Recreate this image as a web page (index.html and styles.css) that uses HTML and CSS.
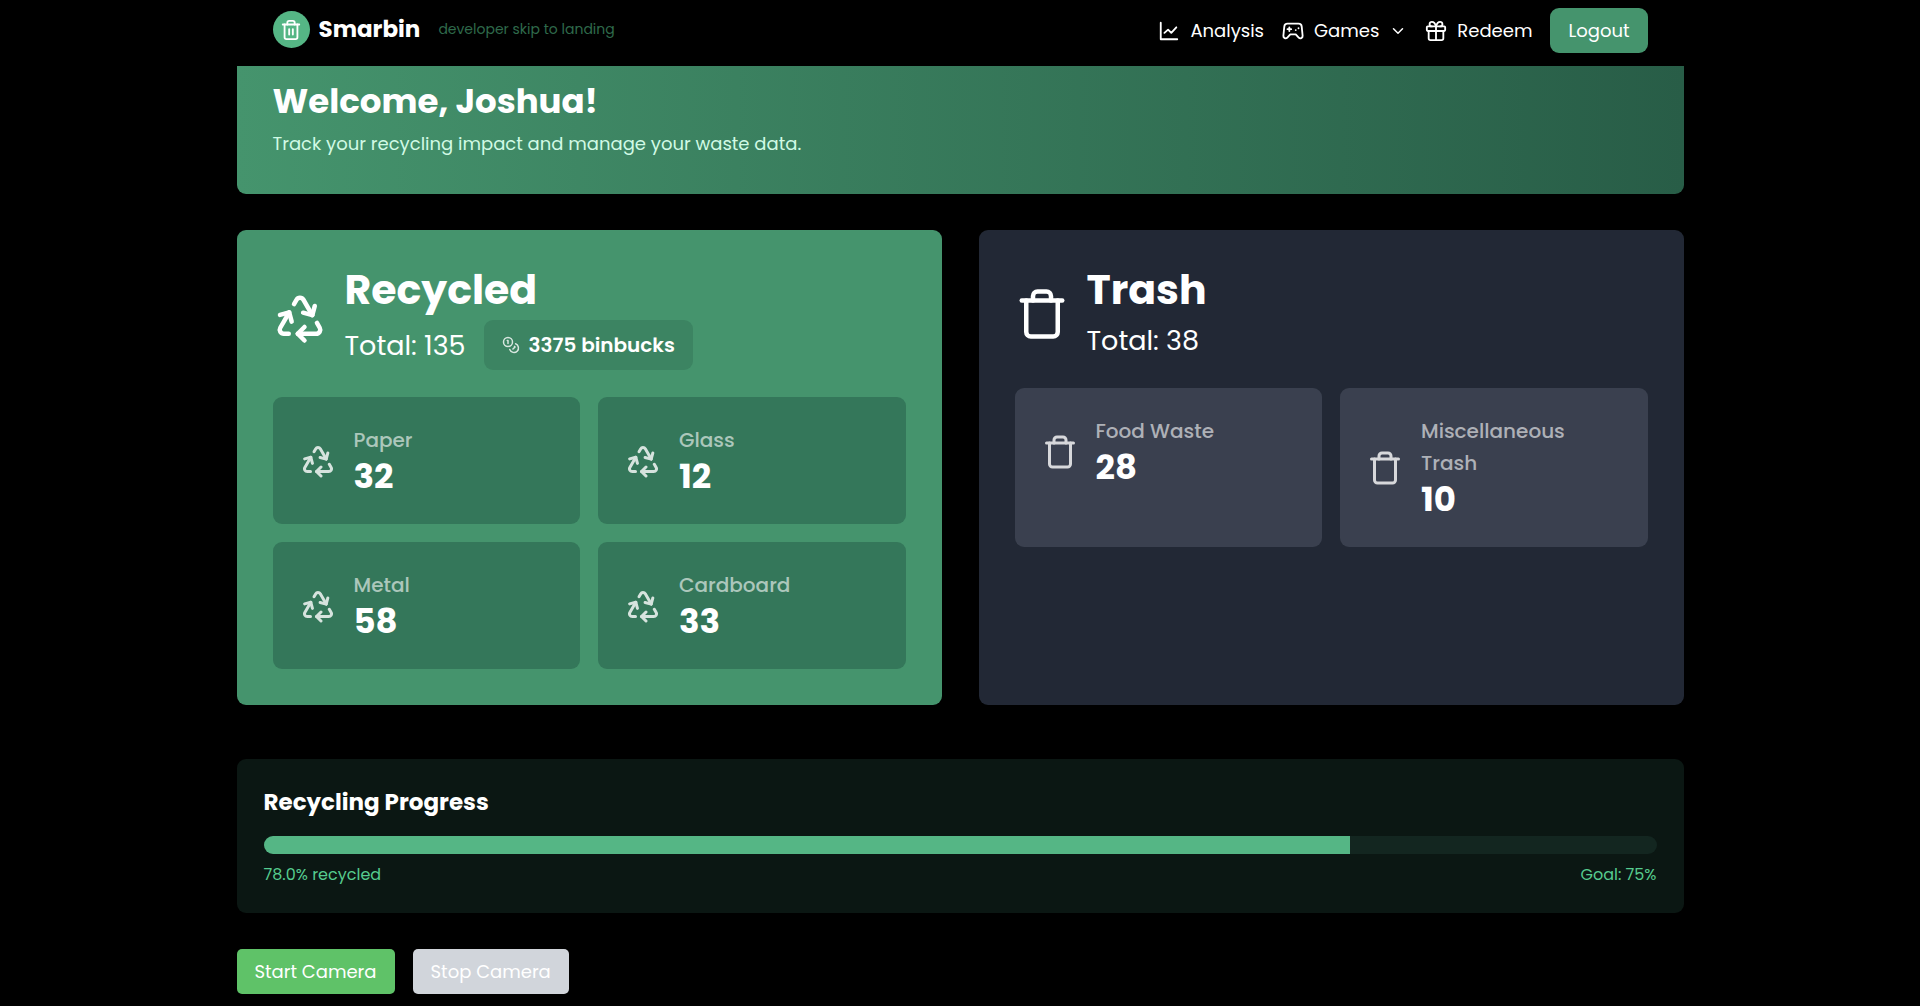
FILE: index.html
```html
<!DOCTYPE html>
<html lang="en">
<head>
    <meta charset="UTF-8">
    <meta name="viewport" content="width=device-width, initial-scale=1.0">
    <title>Smarbin</title>
    <link rel="stylesheet" href="styles.css">
</head>
<body>
    <!-- shared icons -->
    <svg class="sprite" aria-hidden="true">
        <symbol id="icon-recycle" viewBox="0 0 24 24">
            <path d="M7 19H4.815a1.83 1.83 0 0 1-1.57-.881 1.785 1.785 0 0 1-.004-1.784L7.196 9.5"/>
            <path d="M11 19h8.203a1.83 1.83 0 0 0 1.556-.89 1.784 1.784 0 0 0 0-1.775l-1.226-2.12"/>
            <path d="m14 16-3 3 3 3"/>
            <path d="M8.293 13.596 7.196 9.5 3.1 10.598"/>
            <path d="m9.344 5.811 1.093-1.892A1.83 1.83 0 0 1 11.985 3a1.784 1.784 0 0 1 1.546.888l3.943 6.843"/>
            <path d="m13.378 9.633 4.096 1.098 1.097-4.096"/>
        </symbol>
        <symbol id="icon-trash" viewBox="0 0 24 24">
            <path d="M3 6h18"/>
            <path d="M19 6v14a2 2 0 0 1-2 2H7a2 2 0 0 1-2-2V6"/>
            <path d="M8 6V4a2 2 0 0 1 2-2h4a2 2 0 0 1 2 2v2"/>
        </symbol>
    </svg>

    <nav class="navbar">
        <div class="navbar-inner">
            <div class="brand">
                <span class="brand-logo">
                    <svg class="icon icon-md" viewBox="0 0 24 24">
                        <path d="M3 6h18"/>
                        <path d="M19 6v14a2 2 0 0 1-2 2H7a2 2 0 0 1-2-2V6"/>
                        <path d="M8 6V4a2 2 0 0 1 2-2h4a2 2 0 0 1 2 2v2"/>
                        <path d="M10 11v6M14 11v6"/>
                    </svg>
                </span>
                <span class="brand-name">Smarbin</span>
                <a class="dev-link" href="#">developer skip to landing</a>
            </div>
            <div class="nav-links">
                <a class="nav-link" href="#">
                    <svg class="icon icon-md" viewBox="0 0 24 24">
                        <path d="M3 3v18h18"/>
                        <path d="M7 14l4-3.500 3.500 3.500 5.500-6"/>
                    </svg>
                    Analysis
                </a>
                <button class="nav-link" type="button">
                    <svg class="icon icon-md" viewBox="0 0 24 24">
                        <path d="M6 4h12a3.500 3.500 0 0 1 3.500 3.200l1 10a2.500 2.500 0 0 1-4.300 2l-3.200-3.500H9l-3.200 3.500a2.500 2.500 0 0 1-4.300-2l1-10A3.500 3.500 0 0 1 6 4z"/>
                        <path d="M8 8v4M6 10h4M15 11h.01M18 9h.01"/>
                    </svg>
                    Games
                    <svg class="icon icon-sm" viewBox="0 0 24 24">
                        <path d="M6 9l6 6 6-6"/>
                    </svg>
                </button>
                <a class="nav-link" href="#">
                    <svg class="icon icon-md" viewBox="0 0 24 24">
                        <rect x="2" y="7" width="20" height="5" rx="1"/>
                        <path d="M4 12v8a2 2 0 0 0 2 2h12a2 2 0 0 0 2-2v-8M12 7v15"/>
                        <path d="M12 7c-1-4-3-5-4.500-5a2.500 2.500 0 0 0 0 5M12 7c1-4 3-5 4.500-5a2.500 2.500 0 0 1 0 5"/>
                    </svg>
                    Redeem
                </a>
                <button class="logout-button" type="button">Logout</button>
            </div>
        </div>
    </nav>

    <main class="container">
        <header class="welcome">
            <h1>Welcome, Joshua!</h1>
            <p>Track your recycling impact and manage your waste data.</p>
        </header>

        <div class="summary">
            <section class="card card-recycled">
                <div class="card-header">
                    <svg class="icon icon-lg"><use href="#icon-recycle"/></svg>
                    <div>
                        <h2>Recycled</h2>
                        <div class="card-total">
                            <span>Total: 135</span>
                            <span class="binbucks">
                                <svg class="icon icon-sm" viewBox="0 0 24 24">
                                    <circle cx="8" cy="8" r="6"/>
                                    <path d="M18.090 10.370A6 6 0 1 1 10.340 18"/>
                                    <path d="M7 6h1v4M16.710 13.880l.7.71-2.820 2.820"/>
                                </svg>
                                3375 binbucks
                            </span>
                        </div>
                    </div>
                </div>
                <div class="items">
                    <div class="item">
                        <div class="item-row">
                            <svg class="icon icon-item"><use href="#icon-recycle"/></svg>
                            <div>
                                <p class="item-label">Paper</p>
                                <p class="item-value">32</p>
                            </div>
                        </div>
                    </div>
                    <div class="item">
                        <div class="item-row">
                            <svg class="icon icon-item"><use href="#icon-recycle"/></svg>
                            <div>
                                <p class="item-label">Glass</p>
                                <p class="item-value">12</p>
                            </div>
                        </div>
                    </div>
                    <div class="item">
                        <div class="item-row">
                            <svg class="icon icon-item"><use href="#icon-recycle"/></svg>
                            <div>
                                <p class="item-label">Metal</p>
                                <p class="item-value">58</p>
                            </div>
                        </div>
                    </div>
                    <div class="item">
                        <div class="item-row">
                            <svg class="icon icon-item"><use href="#icon-recycle"/></svg>
                            <div>
                                <p class="item-label">Cardboard</p>
                                <p class="item-value">33</p>
                            </div>
                        </div>
                    </div>
                </div>
            </section>

            <section class="card card-trash">
                <div class="card-header">
                    <svg class="icon icon-lg"><use href="#icon-trash"/></svg>
                    <div>
                        <h2>Trash</h2>
                        <div class="card-total">
                            <span>Total: 38</span>
                        </div>
                    </div>
                </div>
                <div class="items">
                    <div class="item">
                        <div class="item-row">
                            <svg class="icon icon-item"><use href="#icon-trash"/></svg>
                            <div>
                                <p class="item-label">Food Waste</p>
                                <p class="item-value">28</p>
                            </div>
                        </div>
                    </div>
                    <div class="item">
                        <div class="item-row">
                            <svg class="icon icon-item"><use href="#icon-trash"/></svg>
                            <div>
                                <p class="item-label">Miscellaneous Trash</p>
                                <p class="item-value">10</p>
                            </div>
                        </div>
                    </div>
                </div>
            </section>
        </div>

        <section class="progress">
            <h3>Recycling Progress</h3>
            <div class="progress-track">
                <div class="progress-fill" style="width: 78%"></div>
            </div>
            <div class="progress-labels">
                <span>78.0% recycled</span>
                <span>Goal: 75%</span>
            </div>
        </section>

        <div class="camera-buttons">
            <button class="start-button" type="button">Start Camera</button>
            <button class="stop-button" type="button" disabled>Stop Camera</button>
        </div>
    </main>
</body>
</html>
```
FILE: styles.css
```css
* {
    box-sizing: border-box;
}
body {
    margin: 0;
    background-color: #000;
    color: #fff;
    font-family: Poppins, Inter, sans-serif;
    font-size: 18px;
    line-height: 27px;
}
h1, h2, h3, p {
    margin: 0;
}
a {
    color: inherit;
    text-decoration: none;
}
button {
    border: none;
    background: none;
    color: #fff;
    font: inherit;
    cursor: pointer;
}
.sprite {
    display: none;
}

/* icons */
.icon {
    flex-shrink: 0;
    fill: none;
    stroke: currentColor;
    stroke-width: 2;
    stroke-linecap: round;
    stroke-linejoin: round;
}
.icon-sm {
    width: 18px;
    height: 18px;
}
.icon-md {
    width: 22px;
    height: 22px;
}
.icon-item {
    width: 36px;
    height: 36px;
    opacity: 0.8;
}
.icon-lg {
    width: 54px;
    height: 54px;
}

/* navbar */
.navbar {
    position: sticky;
    top: 0;
    z-index: 10;
    background-color: #000;
}
.navbar-inner {
    display: flex;
    justify-content: space-between;
    align-items: center;
    max-width: 1447px;
    margin: 0 auto;
    padding: 8px 36px 13px;
}
.brand {
    display: flex;
    align-items: center;
    padding-bottom: 2px;
}
.brand-logo {
    display: flex;
    align-items: center;
    justify-content: center;
    width: 37px;
    height: 37px;
    margin-right: 9px;
    border-radius: 50%;
    background-color: #55b685;
}
.brand-name {
    margin-right: 18px;
    font-size: 23px;
    font-weight: bold;
}
.dev-link {
    color: #2f6a4b;
    font-size: 14px;
}
.nav-links {
    display: flex;
    align-items: center;
    gap: 18px;
}
.nav-link {
    display: flex;
    align-items: center;
    gap: 10px;
    padding: 0;
}
.logout-button {
    padding: 9px 18px;
    border-radius: 9px;
    background-color: #45946d;
}

.container {
    max-width: 1447px;
    margin: 0 auto;
}
.welcome {
    padding: 15px 36px 37px;
    border-radius: 0 0 9px 9px;
    background: linear-gradient(to right, #45946d, #285d47);
}
.welcome h1 {
    margin-bottom: 9px;
    font-size: 34px;
    font-weight: bold;
    line-height: 40px;
}
.welcome p {
    color: #d1fae5;
}

/* recycled / trash cards */
.summary {
    display: grid;
    grid-template-columns: 1fr 1fr;
    gap: 37px;
    margin-top: 36px;
}
.card {
    padding: 36px;
    border-radius: 9px;
}
.card-recycled {
    background-color: #45946d;
}
.card-trash {
    background-color: #222835;
}
.card-header {
    display: flex;
    align-items: center;
    gap: 18px;
    margin-bottom: 27px;
}
.card-header h2 {
    margin-bottom: 7px;
    font-size: 41px;
    font-weight: bold;
    line-height: 47px;
}
.card-total {
    display: flex;
    align-items: center;
    gap: 18px;
    font-size: 27px;
    line-height: 41px;
}
.binbucks {
    display: flex;
    align-items: center;
    gap: 9px;
    padding: 9px 18px;
    border-radius: 9px;
    background-color: #3c8462;
    font-size: 20px;
    font-weight: 600;
    line-height: 32px;
}
.binbucks .icon {
    opacity: 0.8;
}
.items {
    display: grid;
    grid-template-columns: 1fr 1fr;
    gap: 18px;
}
.item {
    padding: 27px;
    border-radius: 9px;
}
.card-recycled .item {
    background-color: #34775a;
}
.card-trash .item {
    background-color: #3a404f;
}
.item-row {
    display: flex;
    align-items: center;
    gap: 18px;
}
.item-label {
    color: rgba(255, 255, 255, 0.6);
    font-size: 20px;
    font-weight: 500;
    line-height: 32px;
}
.item-value {
    font-size: 34px;
    font-weight: bold;
    line-height: 41px;
}

/* progress */
.progress {
    margin-top: 54px;
    padding: 27px;
    border-radius: 9px;
    background-color: #0b1713;
}
.progress h3 {
    margin-bottom: 18px;
    font-size: 23px;
    font-weight: bold;
    line-height: 32px;
}
.progress-track {
    height: 18px;
    border-radius: 9px;
    background-color: #132620;
    overflow: hidden;
}
.progress-fill {
    height: 100%;
    background-color: #55b685;
}
.progress-labels {
    display: flex;
    justify-content: space-between;
    margin-top: 9px;
    color: #56cc8f;
    font-size: 16px;
    line-height: 23px;
}

.camera-buttons {
    display: flex;
    gap: 18px;
    margin-top: 36px;
}
.start-button,
.stop-button {
    padding: 9px 18px;
    border-radius: 5px;
}
.start-button {
    background-color: #5fc268;
}
.stop-button {
    background-color: #d1d5db;
    cursor: not-allowed;
}
```
